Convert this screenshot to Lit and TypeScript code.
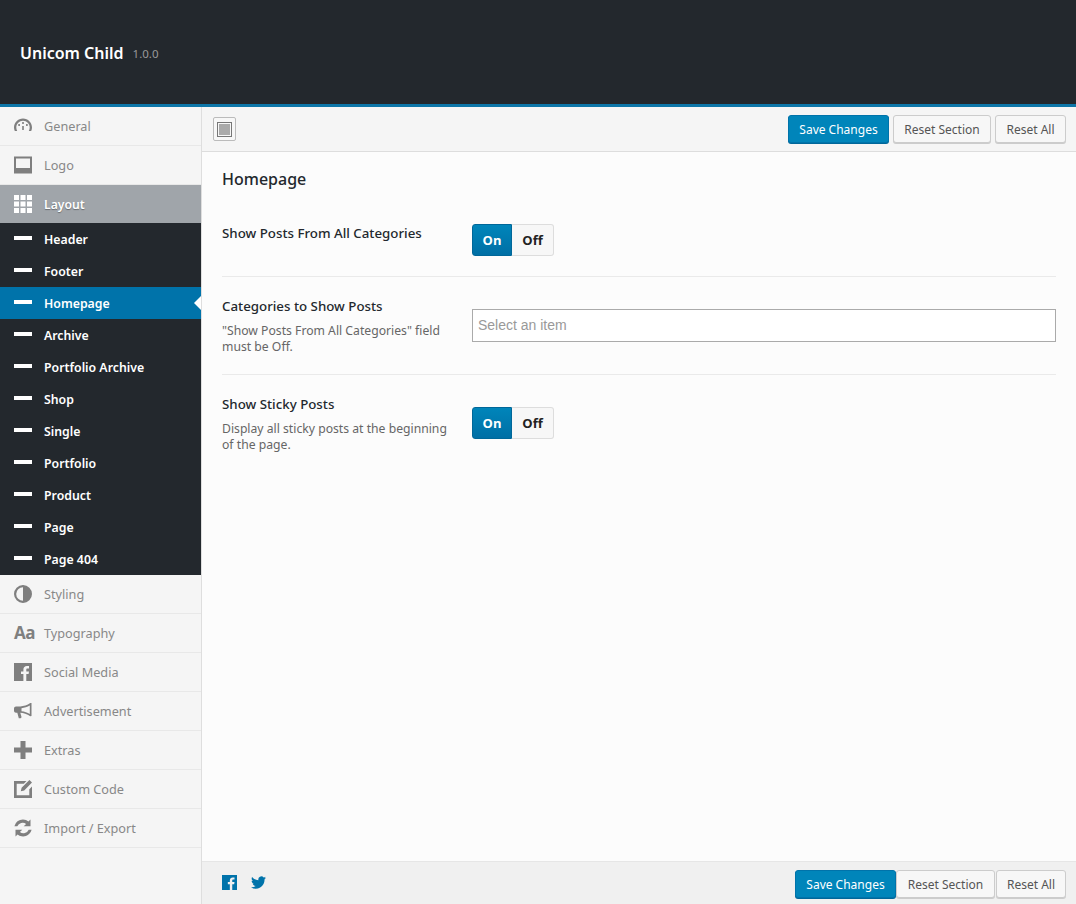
import { LitElement, css, html, svg } from "lit";
import { customElement } from "lit/decorators.js";

const icons: Record<string, unknown> = {
  gauge: svg`<path d="M9 1.500C4 1.500 0 5.500 0 10.500c0 1.300.3 2.500.8 3.500h2.400a6.800 6.800 0 0 1-.9-3.500C2.300 6.800 5.300 3.800 9 3.800s6.700 3 6.700 6.700c0 1.300-.3 2.500-.9 3.500h2.400c.5-1 .8-2.200.8-3.500 0-5-4-9-9-9z"/><rect x="8.200" y="5" width="1.600" height="2"/><rect x="4.300" y="7" width="1.600" height="2"/><rect x="12.100" y="7" width="1.600" height="2"/><rect x="8.200" y="9" width="1.600" height="4"/>`,
  logo: svg`<path fill-rule="evenodd" d="M0 .5h18v17H0zM2 2.500v9.500h14V2.500z"/>`,
  grid: svg`<path d="M0 0h5v5H0zM6.500 0h5v5h-5zM13 0h5v5h-5zM0 6.500h5v5H0zM6.500 6.500h5v5h-5zM13 6.500h5v5h-5zM0 13h5v5H0zM6.500 13h5v5h-5zM13 13h5v5h-5z"/>`,
  contrast: svg`<path fill-rule="evenodd" d="M9 0a9 9 0 1 1 0 18A9 9 0 0 1 9 0zM9 2.200a6.800 6.800 0 0 0 0 13.600z"/>`,
  facebook: svg`<path fill-rule="evenodd" d="M0 0h18v18H0zM12.300 18v-6.900h2.300l.4-2.700h-2.700V6.700c0-.8.2-1.300 1.300-1.300H15V3c-.3 0-1.100-.1-2.100-.1-2.100 0-3.500 1.300-3.500 3.600v1.900H7v2.700h2.400V18z"/>`,
  megaphone: svg`<path fill-rule="evenodd" d="M17.500 1v13l-1.200.3C13 12.200 9.500 11 6.300 10.800l1.300 4.500-1 .9H4.800L3.300 10.800H2C.9 10.800 0 9.900 0 8.800V6.400c0-1.100.9-2 2-2h4.300c3.300 0 7-1.200 10-3.300zM15.800 3.600C13.300 5 10.500 6 7.500 6.300v3c3 .3 5.800 1.200 8.300 2.600z"/>`,
  plus: svg`<path d="M6.500 0h5v6.500H18v5h-6.500V18h-5v-6.500H0v-5h6.500z"/>`,
  edit: svg`<path fill-rule="evenodd" d="M0 1h12.500l-2.700 2.700H2.700v11.600h12.600V9.200L18 6.500V18H0zM15.400 0 18 2.600 10.200 10.400l-3.400.8.800-3.400z"/>`,
  sync: svg`<path d="M9 .5c2.100 0 4 .8 5.400 2.100L16.500.5v6.800H9.700l2.400-2.400A5.800 5.800 0 0 0 3.300 7.300H.4A8.700 8.700 0 0 1 9 .5zM17.600 10.700A8.700 8.700 0 0 1 3.600 15.400L1.500 17.500v-6.800h6.800l-2.400 2.400a5.800 5.800 0 0 0 8.800-2.400z"/>`,
};

const topItems = [
  { label: "General", icon: "gauge" },
  { label: "Logo", icon: "logo" },
];
const subItems = ["Header", "Footer", "Homepage", "Archive", "Portfolio Archive", "Shop", "Single", "Portfolio", "Product", "Page", "Page 404"];
const bottomItems = [
  { label: "Styling", icon: "contrast" },
  { label: "Typography", icon: "aa" },
  { label: "Social Media", icon: "facebook" },
  { label: "Advertisement", icon: "megaphone" },
  { label: "Extras", icon: "plus" },
  { label: "Custom Code", icon: "edit" },
  { label: "Import / Export", icon: "sync" },
];

@customElement("app-root")
export class AppRoot extends LitElement {
  static styles = css`
    :host {
      display: block;
      height: 904px;
      overflow: hidden;
      font-family: "Noto Sans", "Open Sans", sans-serif;
      background: #fcfcfc;
      color: #23282d;
    }
    .top {
      height: 102px;
      background: #23282d;
      border-bottom: 3px solid #0d76a8;
      display: flex;
      align-items: center;
      padding: 2px 0 0 20px;
      gap: 9px;
    }
    .title {
      font-size: 16px;
      font-weight: 600;
      color: #fff;
    }
    .version {
      font-size: 11.500px;
      color: #999;
    }
    .body {
      display: flex;
      height: 797px;
    }
    .side {
      width: 201px;
      flex: none;
      background: #f5f5f5;
      border-right: 1px solid #dedede;
    }
    .item {
      height: 38px;
      border-bottom: 1px solid #e8e8e8;
      display: flex;
      align-items: center;
      padding-left: 14px;
      gap: 12px;
      font-size: 12.700px;
      color: #888;
    }
    .item svg {
      width: 18px;
      height: 18px;
      fill: #7f7f7f;
      flex: none;
    }
    .aa {
      width: 18px;
      font-size: 17px;
      font-weight: 700;
      font-family: "Open Sans", sans-serif;
      letter-spacing: -0.5px;
      color: #7f7f7f;
      line-height: 18px;
      flex: none;
      white-space: nowrap;
    }
    .item.open {
      background: #a0a5aa;
      border-bottom: none;
      height: 38px;
      color: #fff;
      font-size: 12.200px;
      font-weight: 600;
      text-shadow: 0 1px 1px rgba(0, 0, 0, 0.35);
    }
    .item.open svg {
      fill: #fff;
    }
    .sub {
      background: #23282d;
    }
    .sub div {
      height: 32px;
      display: flex;
      align-items: center;
      padding-left: 14px;
      gap: 12px;
      font-size: 12.300px;
      font-weight: 600;
      color: #fff;
      position: relative;
    }
    .sub i {
      width: 18px;
      height: 4px;
      background: #fff;
      flex: none;
      position: relative;
      top: -1px;
    }
    .sub .current {
      background: #0073aa;
    }
    .sub .current::after {
      content: "";
      position: absolute;
      right: 0;
      top: 9px;
      border: 7px solid transparent;
      border-right-color: #fff;
      border-left: none;
    }
    .main {
      flex: 1;
      display: flex;
      flex-direction: column;
      min-width: 0;
    }
    .toolbar {
      height: 45px;
      box-sizing: border-box;
      background: #f5f5f5;
      border-bottom: 1px solid #ddd;
      display: flex;
      align-items: center;
      padding: 0 10px 0 11px;
      gap: 4px;
    }
    .expand {
      width: 23px;
      height: 24px;
      box-sizing: border-box;
      border: 1px solid #bbb;
      border-radius: 2px;
      background: #f7f7f7;
      margin-right: auto;
      display: flex;
      align-items: center;
      justify-content: center;
    }
    .expand span {
      width: 15px;
      height: 15px;
      box-sizing: border-box;
      border: 1px solid #777;
      padding: 1px;
      display: block;
    }
    .expand span::before {
      content: "";
      display: block;
      width: 100%;
      height: 100%;
      background: #aaa;
    }
    .btn {
      height: 28px;
      box-sizing: border-box;
      border: 1px solid #ccc;
      border-radius: 3px;
      background: #f7f7f7;
      box-shadow: 0 1px 0 #ccc;
      color: #555;
      font-size: 12px;
      display: flex;
      align-items: center;
      justify-content: center;
      white-space: nowrap;
    }
    .btn.primary {
      background: #0085ba;
      border-color: #0073aa;
      box-shadow: 0 1px 0 #006799;
      color: #fff;
    }
    .content {
      flex: 1;
      padding: 16px 20px 0;
    }
    h2 {
      margin: 0 0 34px;
      font-size: 16px;
      line-height: 22px;
      font-weight: 500;
    }
    .row {
      display: flex;
      border-bottom: 1px solid #eaeaea;
      padding: 19px 0;
    }
    .row:last-child {
      border-bottom: none;
    }
    .row.first {
      padding: 0 0 20px;
    }
    .label {
      width: 250px;
      flex: none;
      font-size: 13.300px;
      line-height: 18px;
      font-weight: 500;
      padding-top: 1px;
    }
    .row.first .label {
      padding-top: 0;
    }
    .desc {
      font-size: 12.200px;
      line-height: 16px;
      font-weight: 400;
      color: #666;
      margin-top: 8px;
      width: 232px;
    }
    .switch {
      display: flex;
      height: 32px;
      width: 82px;
      font-size: 13px;
      font-weight: 700;
      font-family: "Open Sans", "Noto Sans", sans-serif;
    }
    .row.spaced .switch {
      margin-top: 13px;
    }
    .switch span {
      display: flex;
      align-items: center;
      justify-content: center;
      box-sizing: border-box;
    }
    .on {
      width: 40px;
      background: linear-gradient(#0085ba, #006fa5);
      border: 1px solid #006799;
      border-radius: 3px 0 0 3px;
      color: #fff;
    }
    .off {
      width: 42px;
      background: #f7f7f7;
      border: 1px solid #ddd;
      border-left: none;
      border-radius: 0 3px 3px 0;
      color: #222;
    }
    .select {
      flex: 1;
      height: 33px;
      box-sizing: border-box;
      border: 1px solid #aaa;
      background: #fff;
      font-family: "Liberation Sans", Arial, sans-serif;
      font-size: 14px;
      color: #999;
      display: flex;
      align-items: center;
      padding: 0 0 2px 5px;
      margin-top: 13px;
    }
    .footer {
      height: 43px;
      box-sizing: border-box;
      background: #f0f0f0;
      border-top: 1px solid #e6e6e6;
      display: flex;
      align-items: center;
      padding: 2px 10px 0 20px;
    }
    .social {
      display: flex;
      gap: 14px;
      margin-right: auto;
      position: relative;
      top: -2px;
    }
    .social svg {
      width: 15px;
      height: 15px;
      fill: #0073aa;
    }
    .footer .all {
      margin-left: 1px;
    }
  `;

  private icon(name: string) {
    if (name === "aa") return html`<span class="aa">Aa</span>`;
    return html`<svg viewBox="0 0 18 18">${icons[name]}</svg>`;
  }

  private item(it: { label: string; icon: string }) {
    return html`<div class="item">${this.icon(it.icon)}<span>${it.label}</span></div>`;
  }

  private buttons(section: number, all: number) {
    return html`
      <div class="btn primary" style="width:101px">Save Changes</div>
      <div class="btn" style="width:${section}px">Reset Section</div>
      <div class="btn all" style="width:${all}px">Reset All</div>
    `;
  }

  render() {
    return html`
      <div class="top">
        <span class="title">Unicom Child</span>
        <span class="version">1.0.0</span>
      </div>
      <div class="body">
        <nav class="side">
          ${topItems.map((it) => this.item(it))}
          <div class="item open"><svg viewBox="0 0 18 18">${icons.grid}</svg><span>Layout</span></div>
          <div class="sub">
            ${subItems.map((s) => html`<div class=${s === "Homepage" ? "current" : ""}><i></i><span>${s}</span></div>`)}
          </div>
          ${bottomItems.map((it) => this.item(it))}
        </nav>
        <div class="main">
          <div class="toolbar">
            <div class="expand"><span></span></div>
            ${this.buttons(98, 71)}
          </div>
          <div class="content">
            <h2>Homepage</h2>
            <div class="row first">
              <div class="label">Show Posts From All Categories</div>
              <div class="switch"><span class="on">On</span><span class="off">Off</span></div>
            </div>
            <div class="row spaced">
              <div class="label">
                Categories to Show Posts
                <div class="desc">"Show Posts From All Categories" field must be Off.</div>
              </div>
              <div class="select">Select an item</div>
            </div>
            <div class="row spaced">
              <div class="label">
                Show Sticky Posts
                <div class="desc">Display all sticky posts at the beginning of the page.</div>
              </div>
              <div class="switch"><span class="on">On</span><span class="off">Off</span></div>
            </div>
          </div>
          <div class="footer">
            <div class="social">
              <svg viewBox="0 0 18 18">${icons.facebook}</svg>
              <svg viewBox="0 0 18 18"><path d="M18 3.400c-.7.3-1.400.5-2.100.6.800-.5 1.300-1.200 1.600-2-.7.4-1.500.7-2.300.9a3.700 3.700 0 0 0-6.300 3.400C5.800 6.100 3.100 4.600 1.300 2.400c-1 1.700-.5 3.800 1.100 4.900-.6 0-1.200-.2-1.700-.5 0 1.800 1.300 3.300 3 3.700-.5.100-1.100.2-1.700.1.500 1.500 1.900 2.500 3.500 2.600A7.400 7.400 0 0 1 0 14.700 10.500 10.500 0 0 0 16.200 5.300c.7-.5 1.300-1.200 1.800-1.900z"/></svg>
            </div>
            ${this.buttons(99, 70)}
          </div>
        </div>
      </div>
    `;
  }
}
